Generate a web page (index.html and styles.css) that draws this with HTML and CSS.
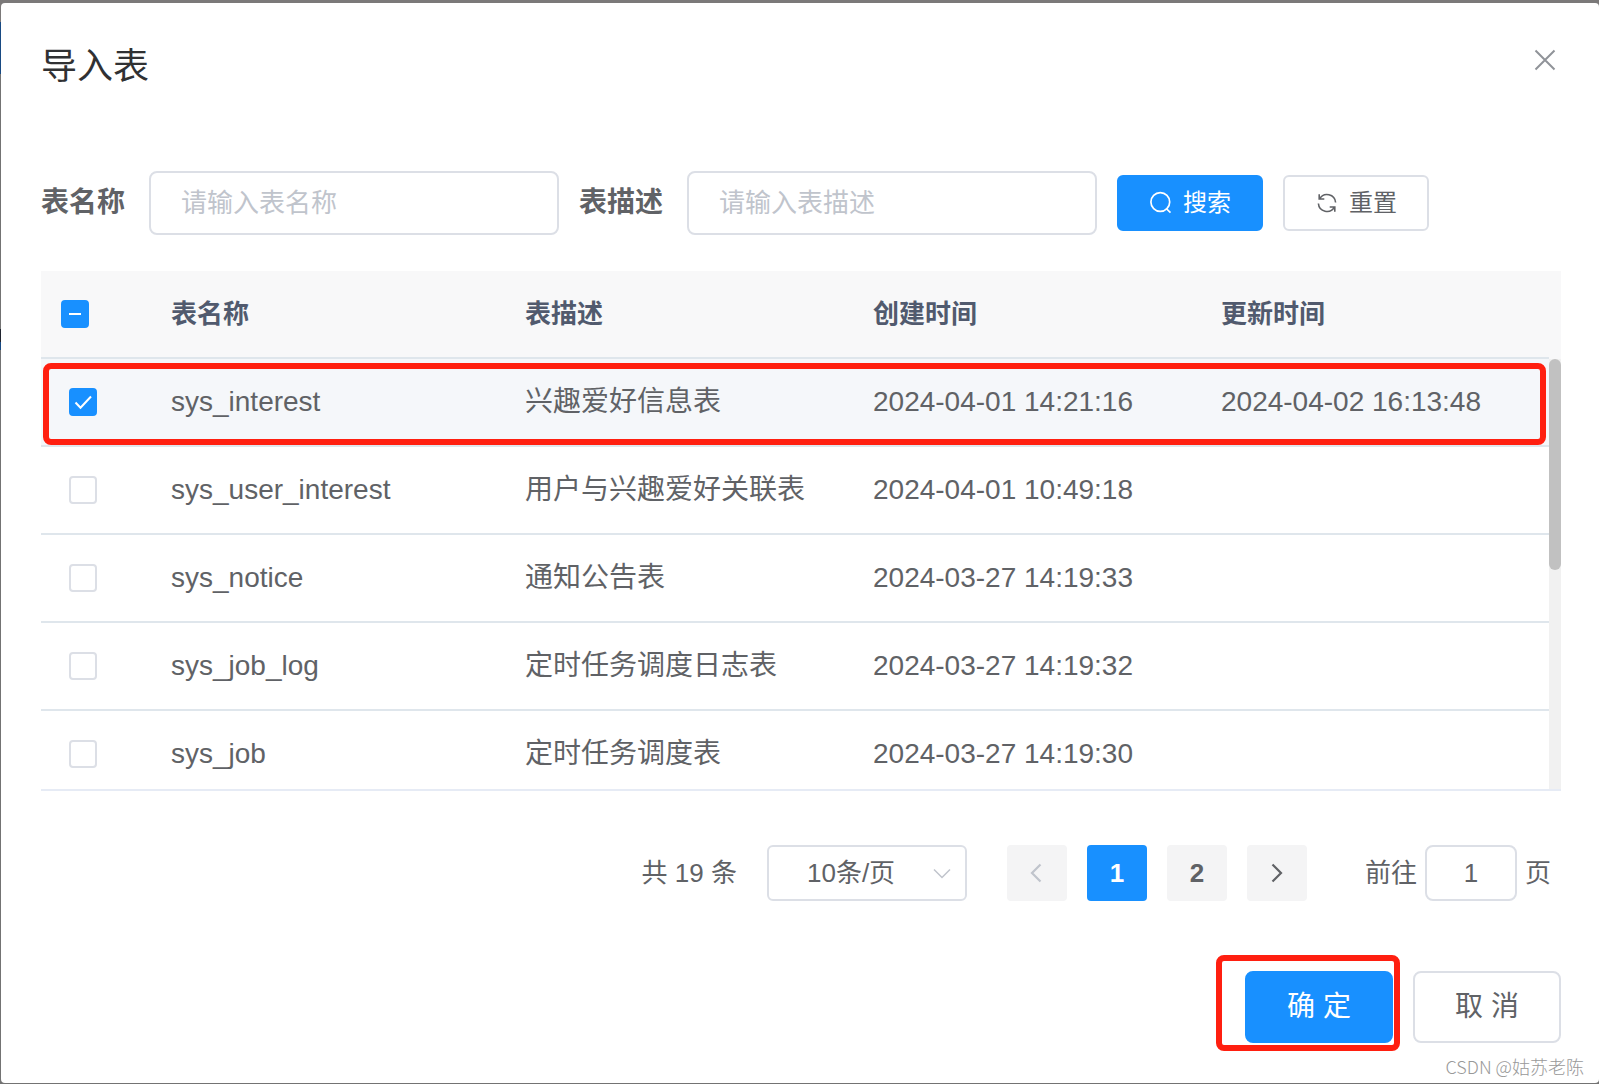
FILE: index.html
```html
<!DOCTYPE html>
<html lang="zh-CN">
<head>
<meta charset="utf-8">
<meta name="viewport" content="width=device-width, initial-scale=1">
<title>导入表</title>
<link rel="stylesheet" href="styles.css">
</head>
<body>
<main class="dialog" role="dialog" aria-labelledby="dialog-title">
  <header class="dialog-header">
    <h1 class="dialog-title" id="dialog-title">导入表</h1>
    <button class="close" type="button" aria-label="关闭">
      <svg width="22" height="22" viewBox="0 0 22 22" fill="none" stroke="currentColor" stroke-width="2"><path d="M1.500 1.500 20.500 20.500M20.500 1.500 1.500 20.500"/></svg>
    </button>
  </header>

  <form class="filters">
    <div class="field">
      <label class="field-label" for="table-name">表名称</label>
      <input class="input" id="table-name" type="text" placeholder="请输入表名称">
    </div>
    <div class="field">
      <label class="field-label" for="table-desc">表描述</label>
      <input class="input" id="table-desc" type="text" placeholder="请输入表描述">
    </div>
    <button class="btn btn-small btn-primary" type="button">
      <svg width="24" height="24" viewBox="0 0 24 24" fill="none" stroke="currentColor" stroke-width="1.700"><circle cx="11.300" cy="11" r="9.400"/><path d="M17.200 17.500 21.500 21.600"/></svg>
      <span>搜索</span>
    </button>
    <button class="btn btn-small" type="button">
      <svg width="24" height="24" viewBox="0 0 24 24" fill="none" stroke="currentColor" stroke-width="1.600"><path d="M4.200 3.200V8H9.300M4.600 7.800A8.600 8.600 0 0 1 20.600 11.500M19.800 20.800V16H14.700M19.400 16.200A8.600 8.600 0 0 1 3.400 12.500"/></svg>
      <span>重置</span>
    </button>
  </form>

  <div class="table-box">
    <div class="table-scroll">
      <table class="table">
        <colgroup><col class="col-check"><col class="col-name"><col><col><col></colgroup>
        <thead>
          <tr>
            <th><input class="check check-partial" type="checkbox" aria-label="全选"></th>
            <th>表名称</th><th>表描述</th><th>创建时间</th><th>更新时间</th>
          </tr>
        </thead>
        <tbody>
          <tr class="row-active">
            <td><input class="check" type="checkbox" aria-label="选择 sys_interest" checked></td>
            <td>sys_interest</td><td>兴趣爱好信息表</td><td>2024-04-01 14:21:16</td><td>2024-04-02 16:13:48</td>
          </tr>
          <tr>
            <td><input class="check" type="checkbox" aria-label="选择 sys_user_interest"></td>
            <td>sys_user_interest</td><td>用户与兴趣爱好关联表</td><td>2024-04-01 10:49:18</td><td></td>
          </tr>
          <tr>
            <td><input class="check" type="checkbox" aria-label="选择 sys_notice"></td>
            <td>sys_notice</td><td>通知公告表</td><td>2024-03-27 14:19:33</td><td></td>
          </tr>
          <tr>
            <td><input class="check" type="checkbox" aria-label="选择 sys_job_log"></td>
            <td>sys_job_log</td><td>定时任务调度日志表</td><td>2024-03-27 14:19:32</td><td></td>
          </tr>
          <tr>
            <td><input class="check" type="checkbox" aria-label="选择 sys_job"></td>
            <td>sys_job</td><td>定时任务调度表</td><td>2024-03-27 14:19:30</td><td></td>
          </tr>
        </tbody>
      </table>
      <div class="mark mark-row"></div>
    </div>
    <div class="scrollbar">
      <div class="scrollbar-head"></div>
      <div class="scrollbar-track"><div class="scrollbar-thumb"></div></div>
    </div>
  </div>

  <nav class="pagination" aria-label="分页">
    <span class="total">共 19 条</span>
    <span class="select-box">
      <select class="select" aria-label="每页条数"><option>10条/页</option><option>20条/页</option></select>
      <svg class="select-arrow" width="18" height="12" viewBox="0 0 18 12" fill="none" stroke="currentColor" stroke-width="1.500"><path d="M1 1.500 9 9.500 17 1.500"/></svg>
    </span>
    <span class="pages">
      <button class="page" type="button" aria-label="上一页" disabled>
        <svg width="20" height="20" viewBox="0 0 20 20" fill="none" stroke="currentColor" stroke-width="2.200"><path d="M13.500 1.500 5 10 13.500 18.500"/></svg>
      </button>
      <button class="page page-current" type="button" aria-current="page">1</button>
      <button class="page" type="button">2</button>
      <button class="page" type="button" aria-label="下一页">
        <svg width="20" height="20" viewBox="0 0 20 20" fill="none" stroke="currentColor" stroke-width="2.200"><path d="M5.500 1.500 14 10 5.500 18.500"/></svg>
      </button>
    </span>
    <span class="jump">
      <label for="jump-page">前往</label>
      <input class="jump-input" id="jump-page" type="text" value="1">
      <span>页</span>
    </span>
  </nav>

  <footer class="dialog-footer">
    <span class="confirm-box">
      <button class="btn btn-large btn-primary" type="button">确 定</button>
      <span class="mark mark-confirm"></span>
    </span>
    <button class="btn btn-large" type="button">取 消</button>
  </footer>
  <span class="watermark">CSDN @姑苏老陈</span>
</main>
</body>
</html>
```

FILE: styles.css
```css
:root {
  --blue: #1890ff;
  --border: #dcdfe6;
  --line: #dfe6ec;
  --text: #606266;
  --red: #ff1f10;
}

* {
  box-sizing: border-box;
}

body {
  margin: 0;
  padding: 3px 0 1px 1px;
  color: var(--text);
  font-family: "Liberation Sans", "Noto Sans CJK SC", sans-serif;
  font-size: 28px;
  line-height: 40px;
  /* sliver of the page behind the dialog */
  background: linear-gradient(#7b7979 0 22px, #184a83 22px 74px, #737373 74px 329px, #20242f 329px 342px, #184a83 342px 350px, #737373 350px);
}

button,
input,
select {
  margin: 0;
  font: inherit;
  color: inherit;
}

svg {
  display: block;
  flex: none;
}

.dialog {
  position: relative;
  display: flex;
  flex-direction: column;
  min-height: calc(100vh - 4px);
  padding: 40px 38px 40px 40px;
  background: #fff;
  border-radius: 4px 4px 4px 4px;
}

.dialog-header {
  display: flex;
  justify-content: space-between;
  align-items: flex-start;
  margin-bottom: 80px;
}

.dialog-title {
  margin: 0;
  color: #303133;
  font-size: 36px;
  font-weight: 400;
  line-height: 48px;
}

.close {
  padding: 6px 5px;
  border: 0;
  background: none;
  color: #909399;
}

.filters {
  display: flex;
  flex-wrap: wrap;
  align-items: center;
  gap: 20px;
  margin-bottom: 36px;
}

.field {
  display: flex;
  align-items: center;
  gap: 24px;
}

.field-label {
  font-weight: 700;
}

.input {
  width: 410px;
  height: 64px;
  padding: 0 30px;
  border: 2px solid var(--border);
  border-radius: 8px;
  background: #fff;
  font-size: 26px;
}

.input::placeholder {
  color: #c0c4cc;
  opacity: 1;
}

.btn {
  display: flex;
  align-items: center;
  justify-content: center;
  gap: 10px;
  padding: 0;
  border: 2px solid var(--border);
  background: #fff;
}

.btn-small {
  width: 146px;
  height: 56px;
  border-radius: 6px;
  font-size: 24px;
}

.btn-large {
  width: 148px;
  height: 72px;
  border-radius: 8px;
}

.btn-primary {
  border-color: var(--blue);
  background: var(--blue);
  color: #fff;
}

.table-box {
  display: flex;
  height: 520px;
  margin-bottom: 54px;
  border-bottom: 2px solid #e6ebf5;
  overflow: hidden;
}

.table-scroll {
  position: relative;
  flex: 1;
  overflow: hidden;
}

.table {
  width: 100%;
  border-spacing: 0;
  table-layout: fixed;
}

.col-check {
  width: 110px;
}

.col-name {
  width: 354px;
}

.table th,
.table td {
  height: 88px;
  padding: 0 20px;
  border-bottom: 2px solid var(--line);
  text-align: left;
  white-space: nowrap;
}

.table th {
  background: #f8f8f9;
  color: #515a6e;
  font-size: 26px;
}

.table td:first-child {
  padding-left: 28px;
}

.row-active td {
  background: #f5f7fa;
}

.check {
  display: block;
  appearance: none;
  width: 28px;
  height: 28px;
  border: 2px solid var(--border);
  border-radius: 4px;
  background: #fff center / 28px 28px no-repeat;
}

.check:checked {
  border-color: var(--blue);
  background-color: var(--blue);
  background-origin: border-box;
  background-image: url("data:image/svg+xml,%3Csvg xmlns='http://www.w3.org/2000/svg' viewBox='0 0 28 28' fill='none' stroke='white' stroke-width='2'%3E%3Cpath d='M6.500 14.500 11.500 19.800 22 8.500'/%3E%3C/svg%3E");
}

.check-partial {
  border-color: var(--blue);
  background: linear-gradient(#fff, #fff) center / 12px 2px no-repeat var(--blue);
}

.scrollbar {
  display: flex;
  flex-direction: column;
  width: 12px;
}

.scrollbar-head {
  height: 88px;
  background: #f8f8f9;
}

.scrollbar-track {
  flex: 1;
  background: #f1f1f1;
}

.scrollbar-thumb {
  height: 49%;
  border-radius: 6px;
  background: #c1c1c1;
}

.mark {
  position: absolute;
  border: 6px solid var(--red);
  border-radius: 8px;
  pointer-events: none;
}

.mark-row {
  top: 92px;
  right: 3px;
  left: 2px;
  height: 82px;
}

.pagination {
  display: flex;
  align-items: center;
  justify-content: flex-end;
  margin-bottom: 70px;
  padding-right: 10px;
  font-size: 26px;
}

.total {
  margin-right: 30px;
}

.select-box {
  position: relative;
  margin-right: 40px;
}

.select {
  display: block;
  appearance: none;
  width: 200px;
  height: 56px;
  padding: 0 38px;
  border: 2px solid var(--border);
  border-radius: 6px;
  background: #fff;
}

.select-arrow {
  position: absolute;
  top: 23px;
  right: 16px;
  color: #c0c4cc;
  pointer-events: none;
}

.pages {
  display: flex;
  gap: 20px;
  margin-right: 58px;
}

.page {
  display: flex;
  align-items: center;
  justify-content: center;
  width: 60px;
  height: 56px;
  padding: 0;
  border: 0;
  border-radius: 4px;
  background: #f4f4f5;
  font-weight: 700;
}

.page:disabled {
  color: #c0c4cc;
}

.page-current {
  background: var(--blue);
  color: #fff;
}

.jump {
  display: flex;
  align-items: center;
  gap: 8px;
}

.jump-input {
  width: 92px;
  height: 56px;
  padding: 0;
  border: 2px solid var(--border);
  border-radius: 8px;
  background: #fff;
  text-align: center;
}

.dialog-footer {
  display: flex;
  justify-content: flex-end;
  gap: 20px;
}

.confirm-box {
  position: relative;
}

.mark-confirm {
  top: -16px;
  right: -7px;
  bottom: -8px;
  left: -29px;
}

.watermark {
  position: absolute;
  right: 15px;
  bottom: 4px;
  color: #999;
  font-family: "Noto Sans CJK SC", sans-serif;
  font-size: 18px;
  font-weight: 300;
  line-height: 26px;
}
```
